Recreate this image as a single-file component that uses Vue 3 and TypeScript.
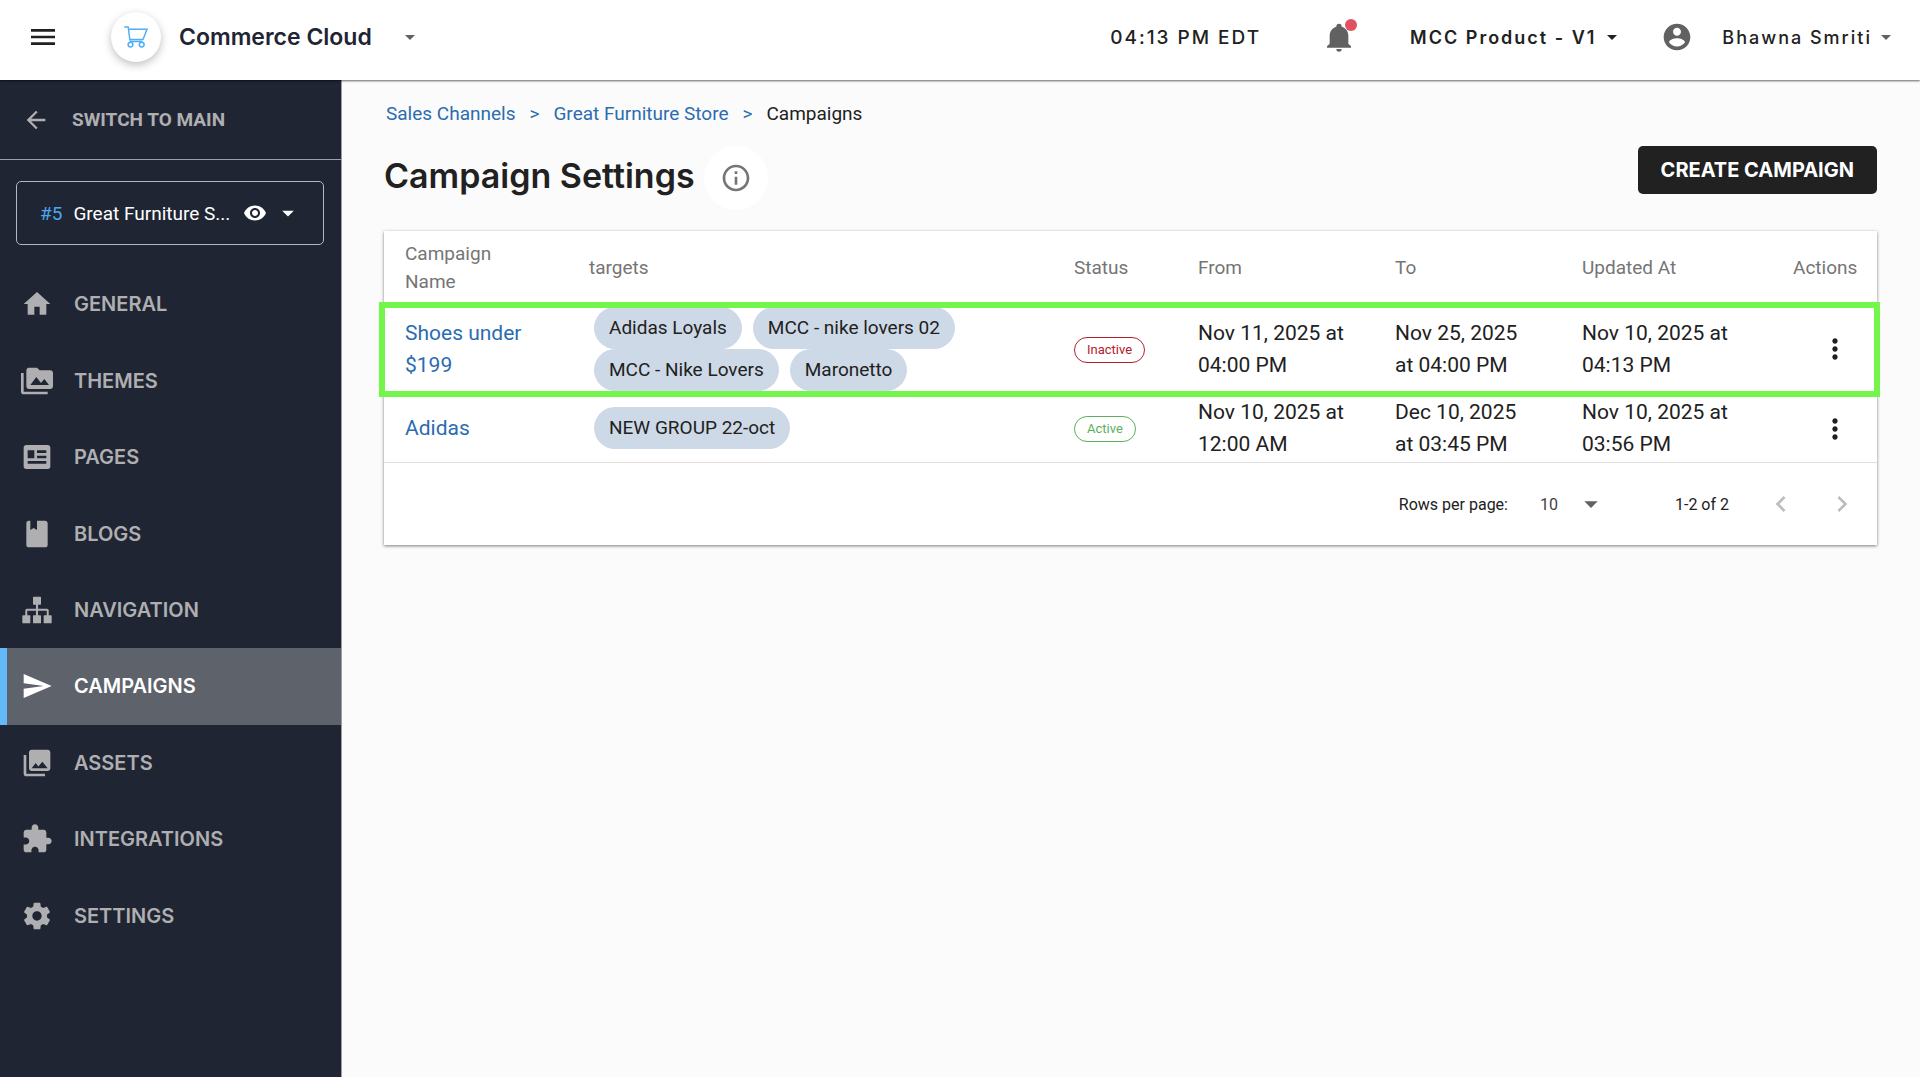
<script setup lang="ts">
import { ref } from 'vue'

interface NavItem {
  label: string
  icon: string
}

interface Campaign {
  name: string
  targets: string[]
  status: 'Active' | 'Inactive'
  from: string
  to: string
  updatedAt: string
}

const navItems: NavItem[] = [
  { label: 'General', icon: 'M10 20v-6h4v6h5v-8h3L12 3 2 12h3v8z' },
  {
    label: 'Themes',
    icon: 'M2 6H0v5h.01L0 20c0 1.1.9 2 2 2h18v-2H2V6zm20-2h-8l-2-2H6c-1.1 0-1.99.9-1.99 2L4 16c0 1.1.9 2 2 2h16c1.1 0 2-.9 2-2V6c0-1.1-.9-2-2-2zM7 15l4.5-6 3.5 4.51 2.5-3.01L21 15H7z',
  },
  {
    label: 'Pages',
    icon: 'M20,3H4C2.89,3 2,3.89 2,5V19A2,2 0 0,0 4,21H20A2,2 0 0,0 22,19V5C22,3.89 21.1,3 20,3M5,7H10V13H5V7M19,17H5V15H19V17M19,13H12V11H19V13M19,9H12V7H19V9Z',
  },
  {
    label: 'Blogs',
    icon: 'M18,22A2,2 0 0,0 20,20V4C20,2.89 19.1,2 18,2H12V9L9.5,7.5L7,9V2H6A2,2 0 0,0 4,4V20A2,2 0 0,0 6,22H18Z',
  },
  {
    label: 'Navigation',
    icon: 'M9 2.5a.5.5 0 0 1 .5-.5h5a.5.5 0 0 1 .5.5v5a.5.5 0 0 1-.5.5h-1.7v3h6.7a1.3 1.3 0 0 1 1.3 1.3V16h1.7a.5.5 0 0 1 .5.5v5a.5.5 0 0 1-.5.5h-5a.5.5 0 0 1-.5-.5v-5a.5.5 0 0 1 .5-.5h1.8v-3.5h-6.5V16h1.7a.5.5 0 0 1 .5.5v5a.5.5 0 0 1-.5.5h-5a.5.5 0 0 1-.5-.5v-5a.5.5 0 0 1 .5-.5h1.7v-3.5H4.7V16h1.8a.5.5 0 0 1 .5.5v5a.5.5 0 0 1-.5.5h-5a.5.5 0 0 1-.5-.5v-5a.5.5 0 0 1 .5-.5h1.7v-3.7A1.3 1.3 0 0 1 4.5 11h6.7V8H9.5a.5.5 0 0 1-.5-.5z',
  },
  { label: 'Campaigns', icon: 'M2.01 21L23 12 2.01 3 2 10l15 2-15 2z' },
  {
    label: 'Assets',
    icon: 'M22 16V4c0-1.1-.9-2-2-2H8c-1.1 0-2 .9-2 2v12c0 1.1.9 2 2 2h12c1.1 0 2-.9 2-2zm-11-4l2.03 2.71L16 11l4 5H8l3-4zM2 6v14c0 1.1.9 2 2 2h14v-2H4V6H2z',
  },
  {
    label: 'Integrations',
    icon: 'M20.5 11H19V7c0-1.1-.9-2-2-2h-4V3.5C13 2.12 11.88 1 10.5 1S8 2.12 8 3.5V5H4c-1.1 0-1.99.9-1.99 2v3.8H3.5c1.49 0 2.7 1.21 2.7 2.7s-1.21 2.7-2.7 2.7H2V20c0 1.1.9 2 2 2h3.8v-1.5c0-1.49 1.21-2.7 2.7-2.7 1.49 0 2.7 1.21 2.7 2.7V22H17c1.1 0 2-.9 2-2v-4h1.5c1.38 0 2.5-1.12 2.5-2.5S21.88 11 20.5 11z',
  },
  {
    label: 'Settings',
    icon: 'M19.43 12.98c.04-.32.07-.64.07-.98s-.03-.66-.07-.98l2.11-1.65c.19-.15.24-.42.12-.64l-2-3.46c-.12-.22-.39-.3-.61-.22l-2.49 1c-.52-.4-1.08-.73-1.69-.98l-.38-2.65C14.46 2.18 14.25 2 14 2h-4c-.25 0-.46.18-.49.42l-.38 2.65c-.61.25-1.17.59-1.69.98l-2.49-1c-.23-.09-.49 0-.61.22l-2 3.46c-.13.22-.07.49.12.64l2.11 1.65c-.04.32-.07.65-.07.98s.03.66.07.98l-2.11 1.65c-.19.15-.24.42-.12.64l2 3.46c.12.22.39.3.61.22l2.49-1c.52.4 1.08.73 1.69.98l.38 2.65c.03.24.24.42.49.42h4c.25 0 .46-.18.49-.42l.38-2.65c.61-.25 1.17-.59 1.69-.98l2.49 1c.23.09.49 0 .61-.22l2-3.46c.12-.22.07-.49-.12-.64l-2.11-1.65zM12 15.5c-1.93 0-3.5-1.57-3.5-3.5s1.57-3.5 3.5-3.5 3.5 1.57 3.5 3.5-1.57 3.5-3.5 3.5z',
  },
]

const campaigns: Campaign[] = [
  {
    name: 'Shoes under $199',
    targets: ['Adidas Loyals', 'MCC - nike lovers 02', 'MCC - Nike Lovers', 'Maronetto'],
    status: 'Inactive',
    from: 'Nov 11, 2025 at 04:00 PM',
    to: 'Nov 25, 2025 at 04:00 PM',
    updatedAt: 'Nov 10, 2025 at 04:13 PM',
  },
  {
    name: 'Adidas',
    targets: ['NEW GROUP 22-oct'],
    status: 'Active',
    from: 'Nov 10, 2025 at 12:00 AM',
    to: 'Dec 10, 2025 at 03:45 PM',
    updatedAt: 'Nov 10, 2025 at 03:56 PM',
  },
]

const current = ref('Campaigns')
const highlighted = ref(0)
const rowsPerPage = ref('10')
</script>

<template>
  <div class="app">
    <header class="topbar">
      <button class="icon-btn menu-btn" type="button" aria-label="Menu">
        <svg class="icon" viewBox="0 0 24 24"><path d="M3 18h18v-2H3v2zm0-5h18v-2H3v2zm0-7v2h18V6H3z" /></svg>
      </button>
      <button class="brand" type="button">
        <span class="brand-logo">
          <svg class="cart" viewBox="0 0 24 22">
            <path d="M.2 1h4L6 14.600M4.600 3.200h18.400l-4 10.400H6M6 15.400h12.500" />
            <circle cx="6.500" cy="18.600" r="2.400" />
            <circle cx="17.700" cy="18.600" r="2.400" />
          </svg>
        </span>
        <span class="brand-name">Commerce Cloud</span>
        <svg class="icon-sm muted" viewBox="0 0 24 24"><path d="M7 10l5 5 5-5z" /></svg>
      </button>
      <div class="topbar-right">
        <time class="clock">04:13 PM EDT</time>
        <button class="icon-btn bell" type="button" aria-label="Notifications">
          <svg class="icon" viewBox="0 0 24 24"><path d="M21,19V20H3V19L5,17V11C5,7.9 7.03,5.17 10,4.29C10,4.19 10,4.1 10,4A2,2 0 0,1 12,2A2,2 0 0,1 14,4C14,4.1 14,4.19 14,4.29C16.97,5.17 19,7.9 19,11V17L21,19M14,21A2,2 0 0,1 12,23A2,2 0 0,1 10,21" /></svg>
          <span class="dot"></span>
        </button>
        <button class="text-btn product" type="button">
          MCC Product - V1
          <svg class="icon-sm" viewBox="0 0 24 24"><path d="M7 10l5 5 5-5z" /></svg>
        </button>
        <button class="text-btn user" type="button">
          <svg class="icon muted" viewBox="0 0 24 24"><path d="M12 2C6.48 2 2 6.48 2 12s4.48 10 10 10 10-4.48 10-10S17.52 2 12 2zm0 3c1.66 0 3 1.34 3 3s-1.34 3-3 3-3-1.34-3-3 1.34-3 3-3zm0 14.2c-2.5 0-4.71-1.28-6-3.22.03-1.99 4-3.08 6-3.08 1.99 0 5.97 1.09 6 3.08-1.29 1.94-3.5 3.22-6 3.22z" /></svg>
          <span class="user-name">Bhawna Smriti</span>
          <svg class="icon-sm muted" viewBox="0 0 24 24"><path d="M7 10l5 5 5-5z" /></svg>
        </button>
      </div>
    </header>

    <div class="body">
      <aside class="sidebar">
        <a class="switch" href="#">
          <svg class="back" viewBox="0 0 24 24"><path d="M20 11H7.83l5.59-5.59L12 4l-8 8 8 8 1.41-1.41L7.83 13H20v-2z" /></svg>
          SWITCH TO MAIN
        </a>
        <button class="store" type="button">
          <span class="store-id">#5</span>
          <span class="store-name">Great Furniture S...</span>
          <svg class="icon-sm" viewBox="0 0 24 24"><path d="M12 4.5C7 4.5 2.73 7.61 1 12c1.73 4.39 6 7.5 11 7.5s9.27-3.11 11-7.5c-1.73-4.39-6-7.5-11-7.5zM12 17c-2.76 0-5-2.24-5-5s2.24-5 5-5 5 2.24 5 5-2.24 5-5 5zm0-8c-1.66 0-3 1.34-3 3s1.34 3 3 3 3-1.34 3-3-1.34-3-3-3z" /></svg>
          <svg class="store-caret" viewBox="0 0 24 24"><path d="M7 10l5 5 5-5z" /></svg>
        </button>
        <nav class="nav">
          <a
            v-for="item in navItems"
            :key="item.label"
            href="#"
            class="nav-item"
            :class="{ active: item.label === current }"
            @click.prevent="current = item.label"
          >
            <svg class="icon" viewBox="0 0 24 24"><path :d="item.icon" fill-rule="evenodd" /></svg>
            <span>{{ item.label.toUpperCase() }}</span>
          </a>
        </nav>
      </aside>

      <main class="main">
        <nav class="crumbs" aria-label="Breadcrumb">
          <a href="#">Sales Channels</a>
          <span class="sep">&gt;</span>
          <a href="#">Great Furniture Store</a>
          <span class="sep">&gt;</span>
          <span>Campaigns</span>
        </nav>

        <div class="heading">
          <h1>Campaign Settings</h1>
          <button class="info" type="button" aria-label="About campaign settings">
            <svg class="icon" viewBox="0 0 24 24"><path d="M11 7h2v2h-2zm0 4h2v6h-2zm1-9C6.48 2 2 6.48 2 12s4.48 10 10 10 10-4.48 10-10S17.52 2 12 2zm0 18c-4.41 0-8-3.59-8-8s3.59-8 8-8 8 3.59 8 8-3.59 8-8 8z" /></svg>
          </button>
          <button class="create" type="button">CREATE CAMPAIGN</button>
        </div>

        <section class="card">
          <table class="table">
            <colgroup>
              <col class="c-name" />
              <col />
              <col class="c-status" />
              <col class="c-from" />
              <col class="c-to" />
              <col class="c-updated" />
              <col class="c-actions" />
            </colgroup>
            <thead>
              <tr>
                <th scope="col" class="th-name">Campaign Name</th>
                <th scope="col">targets</th>
                <th scope="col">Status</th>
                <th scope="col">From</th>
                <th scope="col">To</th>
                <th scope="col">Updated At</th>
                <th scope="col" class="actions">Actions</th>
              </tr>
            </thead>
            <tbody>
              <tr v-for="(row, i) in campaigns" :key="row.name" :class="{ highlighted: i === highlighted }">
                <td><a href="#">{{ row.name }}</a></td>
                <td>
                  <div class="chips">
                    <span v-for="target in row.targets" :key="target" class="chip">{{ target }}</span>
                  </div>
                </td>
                <td>
                  <span class="status" :class="row.status.toLowerCase()">{{ row.status }}</span>
                </td>
                <td>{{ row.from }}</td>
                <td>{{ row.to }}</td>
                <td>{{ row.updatedAt }}</td>
                <td class="actions">
                  <button class="icon-btn more" type="button" :aria-label="'Actions for ' + row.name">
                    <svg class="icon" viewBox="0 0 24 24"><path d="M12 8c1.1 0 2-.9 2-2s-.9-2-2-2-2 .9-2 2 .9 2 2 2zm0 2c-1.1 0-2 .9-2 2s.9 2 2 2 2-.9 2-2-.9-2-2-2zm0 6c-1.1 0-2 .9-2 2s.9 2 2 2 2-.9 2-2-.9-2-2-2z" /></svg>
                  </button>
                  <span v-if="i === highlighted" class="frame"></span>
                </td>
              </tr>
            </tbody>
          </table>

          <footer class="pager">
            <label for="rows">Rows per page:</label>
            <span class="select">
              <select id="rows" v-model="rowsPerPage">
                <option>10</option>
                <option>25</option>
                <option>50</option>
              </select>
              <svg class="icon" viewBox="0 0 24 24"><path d="M7 10l5 5 5-5z" /></svg>
            </span>
            <span class="range">1-2 of 2</span>
            <button class="icon-btn page-btn" type="button" disabled aria-label="Previous page">
              <svg class="icon" viewBox="0 0 24 24"><path d="M15.41 16.59L10.83 12l4.58-4.59L14 6l-6 6 6 6z" /></svg>
            </button>
            <button class="icon-btn page-btn" type="button" disabled aria-label="Next page">
              <svg class="icon" viewBox="0 0 24 24"><path d="M8.59 16.59L13.17 12 8.59 7.41 10 6l6 6-6 6z" /></svg>
            </button>
          </footer>
        </section>
      </main>
    </div>
  </div>
</template>

<style>
body {
  background: #fbfbfb;
}
</style>

<style scoped>
.app {
  display: flex;
  flex-direction: column;
  min-height: 100vh;
  font-family: Roboto, 'Liberation Sans', sans-serif;
  font-size: 19px;
  color: #212121;
}

.app * {
  box-sizing: border-box;
}

button {
  padding: 0;
  border: 0;
  background: none;
  font: inherit;
  color: inherit;
  cursor: pointer;
}

a {
  color: #2b6cb0;
  text-decoration: none;
}

svg {
  display: block;
  flex: none;
  fill: currentColor;
}

.icon {
  width: 32px;
  height: 32px;
}

.icon-sm {
  width: 24px;
  height: 24px;
}

.muted {
  color: #616161;
}

.topbar {
  position: relative;
  z-index: 1;
  display: flex;
  align-items: center;
  height: 80px;
  padding: 0 22px 6px 27px;
  background: #fff;
  box-shadow: 0 1px 2px rgba(0, 0, 0, 0.6);
  font-family: Inter, sans-serif;
}

.brand {
  display: flex;
  align-items: center;
  margin-left: 52px;
}

.brand-logo {
  display: flex;
  align-items: center;
  justify-content: center;
  width: 50px;
  height: 50px;
  border-radius: 50%;
  box-shadow: 0 3px 8px rgba(0, 0, 0, 0.25);
}

.cart {
  width: 24px;
  height: 22px;
  fill: none;
  stroke: #4fb0f5;
  stroke-width: 1.5;
}

.brand-name {
  margin: 0 26px 0 18px;
  font-size: 23px;
  font-weight: 600;
  color: #1f2533;
}

.topbar-right {
  display: flex;
  align-items: center;
  margin-left: auto;
}

.clock {
  margin-right: 62px;
  font-weight: 500;
  letter-spacing: 2px;
}

.bell {
  position: relative;
  margin-right: 55px;
  color: #616161;
}

.dot {
  position: absolute;
  top: -2px;
  right: -2px;
  width: 12px;
  height: 12px;
  border-radius: 50%;
  background: #e05260;
}

.text-btn {
  display: flex;
  align-items: center;
  font-size: 18px;
  font-weight: 500;
  letter-spacing: 2px;
}

.product {
  gap: 4px;
  margin-right: 37px;
  font-weight: 600;
}

.user-name {
  margin: 0 2px 0 29px;
}

.body {
  display: flex;
  flex: 1;
}

.sidebar {
  flex: none;
  width: 342px;
  border-right: 1px solid #9a9da3;
  background: #1f2533;
}

.switch {
  display: flex;
  align-items: center;
  gap: 22px;
  height: 80px;
  padding-left: 22px;
  border-bottom: 1px solid #9ea0a8;
  font-weight: 700;
  color: #afafb2;
}

.back {
  width: 28px;
  height: 28px;
}

.store {
  display: flex;
  align-items: center;
  width: 308px;
  height: 64px;
  margin: 21px 16px 0;
  padding: 0 21px 0 23px;
  border: 1px solid #b5b8c0;
  border-radius: 5px;
  color: #fff;
}

.store-id {
  color: #4aa9f0;
}

.store-name {
  margin: 0 auto 0 11px;
  white-space: nowrap;
}

.store-caret {
  width: 28px;
  height: 28px;
  margin-left: 7px;
}

.nav {
  display: flex;
  flex-direction: column;
  height: 688px;
  margin-top: 21px;
}

.nav-item {
  display: flex;
  flex: 1;
  align-items: center;
  gap: 21px;
  padding-left: 21px;
  color: #afafb2;
  font-family: Inter, sans-serif;
  font-size: 20px;
  font-weight: 600;
}

.nav-item.active {
  padding-left: 14px;
  border-left: 7px solid #63b9f9;
  background: #5d626b;
  color: #fff;
}

.main {
  flex: 1;
  min-width: 0;
  padding: 20px 43px 40px 42px;
}

.crumbs {
  display: flex;
  gap: 14px;
  padding-left: 2px;
  line-height: 27px;
}

.sep {
  color: #2b6cb0;
}

.heading {
  display: flex;
  align-items: center;
  height: 64px;
  margin: 19px 0 21px;
}

h1 {
  margin: 0;
  padding-bottom: 6px;
  font-family: Inter, sans-serif;
  font-size: 34px;
  font-weight: 600;
}

.info {
  display: flex;
  align-items: center;
  justify-content: center;
  width: 64px;
  height: 64px;
  margin-left: 9px;
  border-radius: 50%;
  background: #fff;
  color: #757575;
}

.create {
  align-self: flex-start;
  height: 48px;
  margin-left: auto;
  padding: 0 23px;
  border-radius: 5px;
  background: #212121;
  color: #fff;
  font-family: Inter, sans-serif;
  font-size: 20px;
  font-weight: 700;
}

.card {
  background: #fff;
  box-shadow: 0 1px 3px rgba(0, 0, 0, 0.5);
}

.table {
  width: 100%;
  border-collapse: separate;
  border-spacing: 0;
  table-layout: fixed;
}

.c-name {
  width: 184px;
}

.c-status {
  width: 124px;
}

.c-from {
  width: 197px;
}

.c-to {
  width: 187px;
}

.c-updated {
  width: 211px;
}

.c-actions {
  width: 105px;
}

th {
  height: 73px;
  padding: 0 0 0 21px;
  color: #757575;
  font-weight: 400;
  line-height: 28px;
  text-align: left;
}

.th-name {
  padding-right: 48px;
}

td {
  height: 69px;
  padding: 0 24px 0 21px;
  border-bottom: 1px solid #e0e0e0;
  font-size: 21px;
  line-height: 32px;
}

.actions {
  padding-right: 21px;
  text-align: right;
}

.highlighted {
  position: relative;
}

.highlighted td {
  height: 90px;
}

.frame {
  position: absolute;
  inset: -2px -3px -3px -5px;
  border: 6px solid #73f54b;
  pointer-events: none;
}

.chips {
  display: flex;
  flex-wrap: wrap;
  column-gap: 11px;
  padding-left: 5px;
}

.chip {
  padding: 0 15px;
  border-radius: 21px;
  background: #cdd9e6;
  font-size: 19px;
  line-height: 42px;
}

.status {
  display: inline-block;
  padding: 0 12px;
  border: 1px solid;
  border-radius: 14px;
  font-size: 13px;
  line-height: 24px;
  vertical-align: middle;
}

.inactive {
  color: #b3202c;
}

.active.status {
  color: #5cb05c;
}

.more {
  margin-right: 5px;
  vertical-align: middle;
}

.pager {
  display: flex;
  align-items: center;
  justify-content: flex-end;
  height: 82px;
  padding-right: 19px;
  font-size: 16px;
}

.select {
  position: relative;
  display: flex;
  align-items: center;
  margin: 0 68px 0 32px;
  color: #616161;
}

select {
  width: 67px;
  padding: 0 32px 0 0;
  border: 0;
  appearance: none;
  background: none;
  font: inherit;
  color: #424242;
}

.select .icon {
  position: absolute;
  right: 0;
  pointer-events: none;
}

.range {
  margin-right: 36px;
}

.page-btn {
  color: #bdbdbd;
}

.page-btn + .page-btn {
  margin-left: 29px;
}
</style>
